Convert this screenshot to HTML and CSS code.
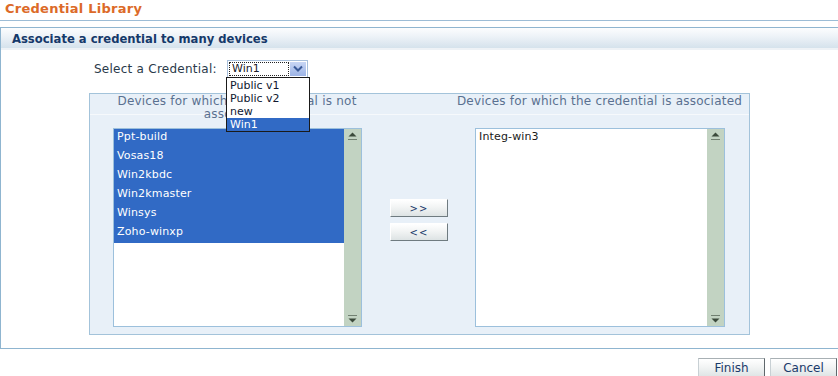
FILE: index.html
```html
<!DOCTYPE html>
<html>
<head>
<meta charset="utf-8">
<link rel="stylesheet" href="styles.css">
</head>
<body>
<div class="title">Credential Library</div>
<div class="box">
  <div class="box-head">Associate a credential to many devices</div>
  <div class="box-body">
    <div class="select-row">
      <span class="select-label">Select a Credential:</span>
      <div class="select-wrap">
        <div class="select">
          <span class="select-value">Win1</span>
          <span class="select-btn"><svg width="10" height="8" viewBox="0 0 10 8"><path d="M1 1.5 L5 5.5 L9 1.5" fill="none" stroke="#3a5a98" stroke-width="2"/></svg></span>
        </div>
        <ul class="dropdown">
          <li>Public v1</li>
          <li>Public v2</li>
          <li>new</li>
          <li class="sel">Win1</li>
        </ul>
      </div>
    </div>
    <div class="panel">
      <div class="panel-head">
        <div class="ph-left">Devices for which the credential is not associated</div>
        <div></div>
        <div class="ph-right">Devices for which the credential is associated</div>
      </div>
      <div class="panel-main">
        <div class="list">
          <ul class="items">
            <li class="sel">Ppt-build</li>
            <li class="sel">Vosas18</li>
            <li class="sel">Win2kbdc</li>
            <li class="sel">Win2kmaster</li>
            <li class="sel">Winsys</li>
            <li class="sel">Zoho-winxp</li>
          </ul>
          <div class="scroll">
            <svg class="arr" width="17" height="14" viewBox="0 0 17 14"><path d="M4.5 7.5 L8.5 3.5 L12.5 7.5 Z" fill="#3b4a3b"/><rect x="4" y="10" width="9" height="1" fill="#3b4a3b" opacity="0.6"/></svg>
            <svg class="arr" width="17" height="14" viewBox="0 0 17 14"><rect x="4" y="3" width="9" height="1" fill="#3b4a3b" opacity="0.6"/><path d="M4.5 6.5 L8.5 10.5 L12.5 6.5 Z" fill="#3b4a3b"/></svg>
          </div>
        </div>
        <div class="mid">
          <button class="btn move">&gt;&gt;</button>
          <button class="btn move">&lt;&lt;</button>
        </div>
        <div class="list">
          <ul class="items">
            <li>Integ-win3</li>
          </ul>
          <div class="scroll">
            <svg class="arr" width="17" height="14" viewBox="0 0 17 14"><path d="M4.5 7.5 L8.5 3.5 L12.5 7.5 Z" fill="#3b4a3b"/><rect x="4" y="10" width="9" height="1" fill="#3b4a3b" opacity="0.6"/></svg>
            <svg class="arr" width="17" height="14" viewBox="0 0 17 14"><rect x="4" y="3" width="9" height="1" fill="#3b4a3b" opacity="0.6"/><path d="M4.5 6.5 L8.5 10.5 L12.5 6.5 Z" fill="#3b4a3b"/></svg>
          </div>
        </div>
      </div>
    </div>
  </div>
</div>
<div class="actions">
  <button class="btn action">Finish</button>
  <button class="btn action">Cancel</button>
</div>
</body>
</html>
```
FILE: styles.css
```css
* { box-sizing: border-box; }
html, body { margin: 0; padding: 0; background: #fff; overflow: hidden; }
body {
  width: 838px;
  height: 376px;
  font-family: "DejaVu Sans", Verdana, sans-serif;
  font-size: 11px;
  color: #333;
}
ul { list-style: none; margin: 0; padding: 0; }

.title {
  height: 21px;
  padding: 1px 0 0 5px;
  font-size: 13px;
  letter-spacing: 0.25px;
  font-weight: bold;
  color: #dc6a28;
  border-bottom: 1px solid #9cbcd6;
}

.box {
  margin-top: 6px;
  border: 1px solid #8fb5d0;
  border-right: none;
  height: 322px;
}
.box-head {
  height: 22px;
  padding: 4px 0 0 11px;
  font-size: 11.6px;
  font-weight: bold;
  color: #15396a;
  background: linear-gradient(#fcfdfe 0%, #eef3f8 40%, #d5e2ec 100%);
  border-bottom: 2px solid #eef2f6;
}
.box-body { padding: 0 0 0 88px; }

.select-row {
  display: flex;
  align-items: flex-start;
  height: 43px;
  padding-top: 10px;
}
.select-label {
  margin-left: 5px;
  width: 133px;
  line-height: 18px;
  font-size: 12px;
  letter-spacing: 0.25px;
  color: #2a3a4a;
}
.select-wrap { position: relative; }
.select {
  display: flex;
  align-items: center;
  width: 81px;
  height: 18px;
  border: 1px solid #a8c0dc;
  padding: 1px;
  background: #fff;
}
.select-value {
  flex: 1;
  height: 14px;
  line-height: 12px;
  padding-left: 2px;
  border: 1px dotted #222;
  color: #1a1a2a;
}
.select-btn {
  width: 16px;
  height: 14px;
  display: flex;
  align-items: center;
  justify-content: center;
  background: linear-gradient(#c8d6f4, #9db4e6);
  margin-left: 1px;
}
.dropdown {
  position: absolute;
  top: 17px;
  left: -1px;
  width: 84px;
  border: 1px solid #1a1a1a;
  background: #fff;
  z-index: 5;
  padding-top: 1px;
}
.dropdown li {
  height: 13px;
  line-height: 13px;
  padding-left: 3px;
  color: #101830;
}
.dropdown li.sel { background: #316ac5; color: #fff; }

.panel {
  width: 661px;
  height: 242px;
  border: 1px solid #a3c3da;
  background: #e8f0f8;
  padding-left: 23px;
}
.panel-head {
  display: grid;
  grid-template-columns: 248px 114px 249px;
  height: 21px;
  border-bottom: 1px solid #f6f9fc;
  margin-left: -23px;
  padding-left: 23px;
  color: #5a7090;
  font-size: 12px;
  letter-spacing: 0.22px;
  line-height: 13px;
  padding-top: 1px;
}
.ph-left { text-align: center; }
.ph-right { text-align: center; white-space: nowrap; display: flex; justify-content: center; }

.panel-main {
  display: grid;
  grid-template-columns: 249px 113px 250px;
  margin-top: 13px;
}
.list {
  display: flex;
  height: 199px;
  border: 1px solid #9cc0dc;
  background: #fff;
}
.items { flex: 1; }
.items li {
  height: 19px;
  line-height: 16px;
  padding-left: 3px;
  letter-spacing: 0.15px;
  color: #1a1a1a;
}
.items li.sel { background: #316ac5; color: #fff; }
.scroll {
  width: 17px;
  background: #c2d3c2;
  display: flex;
  flex-direction: column;
  justify-content: space-between;
}
.arr { display: block; }

.mid {
  display: flex;
  flex-direction: column;
  align-items: center;
  padding-top: 71px;
  gap: 6px;
}
.btn {
  font-family: "DejaVu Sans", Verdana, sans-serif;
  background: linear-gradient(#ffffff 0%, #f2f4f4 45%, #dde3e4 100%);
  border: 1px solid #fff;
  border-right-color: #6f7b80;
  border-bottom-color: #6f7b80;
  color: #1a3a6a;
  padding: 0;
  margin: 0;
  cursor: default;
}
.move {
  width: 58px;
  height: 18px;
  font-size: 10px;
  letter-spacing: 1px;
  margin-left: 1px;
}

.actions {
  display: flex;
  justify-content: flex-end;
  gap: 5px;
  padding: 9px 1px 0 0;
}
.action {
  width: 67px;
  height: 20px;
  font-size: 12px;
  border: 1px solid #a8b0b4;
  border-right-color: #60686c;
  border-bottom-color: #60686c;
  border-left-color: #c8d0d4;
}
```
